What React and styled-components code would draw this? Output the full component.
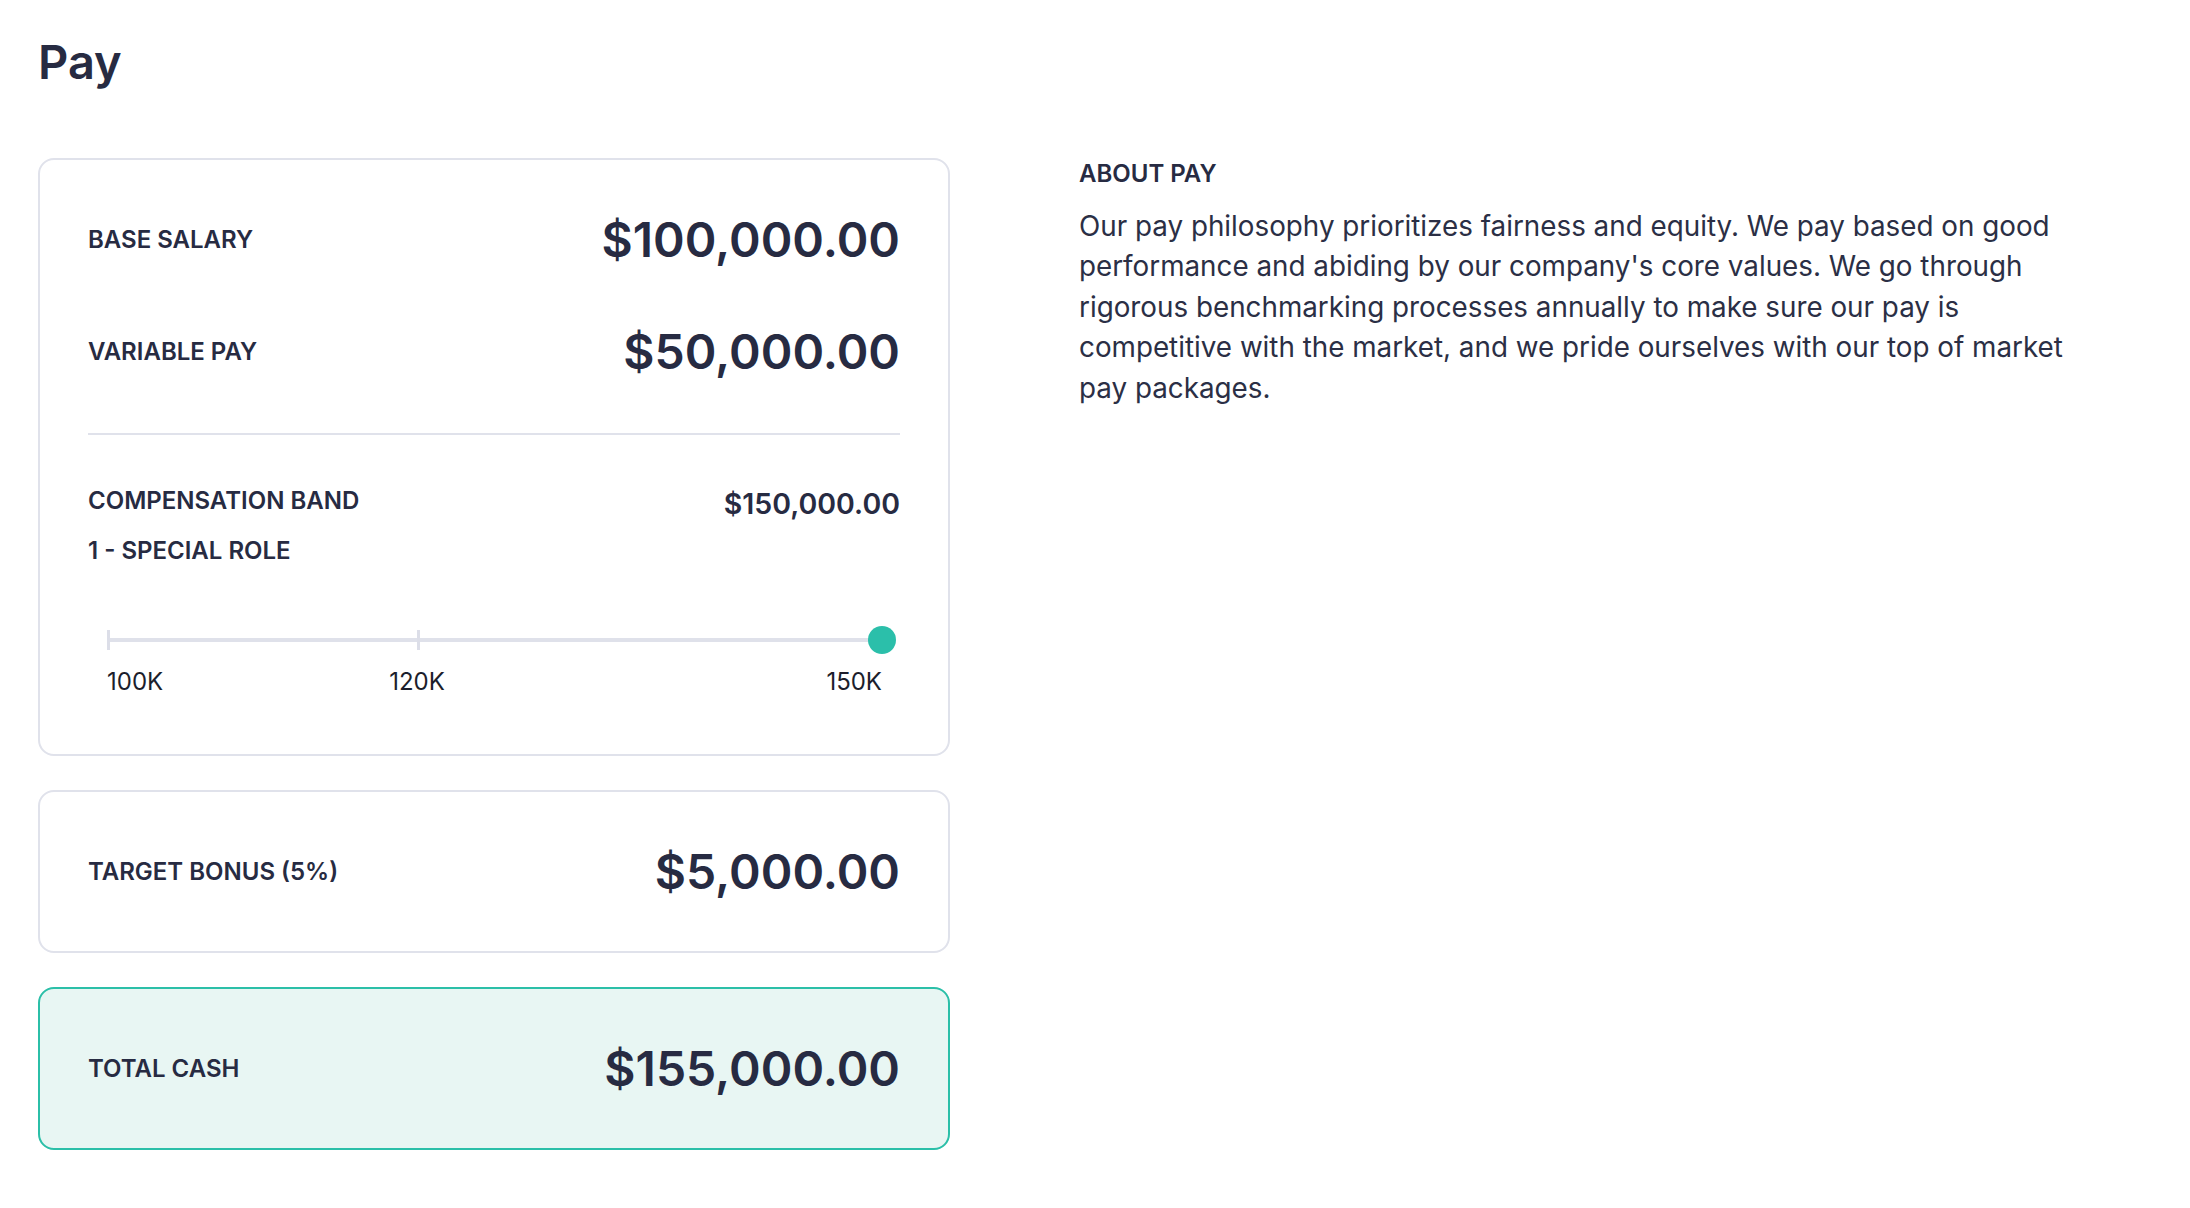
import styled, { createGlobalStyle } from 'styled-components'

const GlobalStyle = createGlobalStyle`
  body {
    margin: 0;
    background: #ffffff;
    font-family: Inter, "Noto Sans", sans-serif;
    color: #272b42;
  }
`

const band = {
  min: 100000,
  max: 150000,
  value: 150000,
  ticks: [
    { label: '100K', value: 100000 },
    { label: '120K', value: 120000 },
    { label: '150K', value: 150000 },
  ],
}

const pct = (v) => ((v - band.min) / (band.max - band.min)) * 100

const App = () => {
  return (
    <Page>
      <GlobalStyle />
      <Title>Pay</Title>
      <Layout>
        <LeftColumn>
          <Card>
            <Row>
              <Label>Base Salary</Label>
              <Amount>$100,000.00</Amount>
            </Row>
            <Row>
              <Label>Variable Pay</Label>
              <Amount>$50,000.00</Amount>
            </Row>
            <Divider />
            <BandHeader>
              <BandLabels>
                <Label>Compensation Band</Label>
                <Label>1 - Special Role</Label>
              </BandLabels>
              <BandAmount>$150,000.00</BandAmount>
            </BandHeader>
            <Slider>
              <Track>
                {band.ticks.slice(0, -1).map((t) => (
                  <Tick key={t.label} style={{ left: `${pct(t.value)}%` }} />
                ))}
                <Thumb style={{ left: `${pct(band.value)}%` }} />
              </Track>
              <TickLabels>
                {band.ticks.map((t, i) => (
                  <TickLabel
                    key={t.label}
                    $align={i === 0 ? 'start' : i === band.ticks.length - 1 ? 'end' : 'center'}
                    style={{ left: `${pct(t.value)}%` }}
                  >
                    {t.label}
                  </TickLabel>
                ))}
              </TickLabels>
            </Slider>
          </Card>
          <Card>
            <Row>
              <Label>Target Bonus (5%)</Label>
              <Amount>$5,000.00</Amount>
            </Row>
          </Card>
          <Card $highlight>
            <Row>
              <Label>Total Cash</Label>
              <Amount>$155,000.00</Amount>
            </Row>
          </Card>
        </LeftColumn>
        <About>
          <Label>About Pay</Label>
          <AboutText>
            Our pay philosophy prioritizes fairness and equity. We pay based on
            good performance and abiding by our company's core values. We go
            through rigorous benchmarking processes annually to make sure our
            pay is competitive with the market, and we pride ourselves with our
            top of market pay packages.
          </AboutText>
        </About>
      </Layout>
    </Page>
  )
}

export default App

const Page = styled.div`
  padding: 33px 40px 40px 38px;
`

const Title = styled.h1`
  margin: 0;
  font-size: 47px;
  line-height: 58px;
  font-weight: 600;
`

const Layout = styled.div`
  display: flex;
  align-items: flex-start;
  gap: 129px;
  margin-top: 67px;
`

const LeftColumn = styled.div`
  width: 912px;
  flex-shrink: 0;
  display: flex;
  flex-direction: column;
  gap: 34px;
`

const Card = styled.div`
  box-sizing: border-box;
  border: 2px solid ${(p) => (p.$highlight ? '#2bbfa8' : '#e0e2eb')};
  background: ${(p) => (p.$highlight ? '#e8f6f3' : '#ffffff')};
  border-radius: 16px;
  padding: 51px 48px 50px;
  display: flex;
  flex-direction: column;
  gap: 54px;
`

const Row = styled.div`
  display: flex;
  align-items: center;
  justify-content: space-between;
`

const Label = styled.div`
  font-size: 24px;
  line-height: 28px;
  font-weight: 600;
  text-transform: uppercase;
`

const Amount = styled.div`
  font-size: 48px;
  line-height: 58px;
  font-weight: 600;
`

const Divider = styled.hr`
  margin: -2px 0 0;
  border: none;
  border-top: 2px solid #e0e2eb;
`

const BandHeader = styled.div`
  display: flex;
  justify-content: space-between;
  align-items: flex-start;
  margin-top: -2px;
`

const BandLabels = styled.div`
  display: flex;
  flex-direction: column;
  gap: 22px;
`

const BandAmount = styled.div`
  font-size: 28.5px;
  line-height: 34px;
  font-weight: 600;
`

const Slider = styled.div`
  padding: 19px 18px 8px 19px;
`

const Track = styled.div`
  position: relative;
  height: 4px;
  background: #dfe1ea;
`

const Tick = styled.div`
  position: absolute;
  top: -8px;
  width: 3px;
  height: 20px;
  background: #dcdee8;
`

const Thumb = styled.div`
  position: absolute;
  top: 50%;
  width: 28px;
  height: 28px;
  border-radius: 50%;
  background: #2bbfaa;
  transform: translate(-50%, -50%);
`

const TickLabels = styled.div`
  position: relative;
  height: 28px;
  margin-top: 26px;
`

const TickLabel = styled.span`
  position: absolute;
  top: 0;
  font-size: 24px;
  line-height: 28px;
  color: #1c1e2c;
  white-space: nowrap;
  transform: translateX(
    ${(p) => (p.$align === 'start' ? '0' : p.$align === 'end' ? '-100%' : '-50%')}
  );
`

const About = styled.div`
  max-width: 1030px;
  padding-top: 2px;
`

const AboutText = styled.p`
  margin: 18px 0 0;
  font-size: 27.8px;
  line-height: 40.4px;
  color: #2b2f45;
`
